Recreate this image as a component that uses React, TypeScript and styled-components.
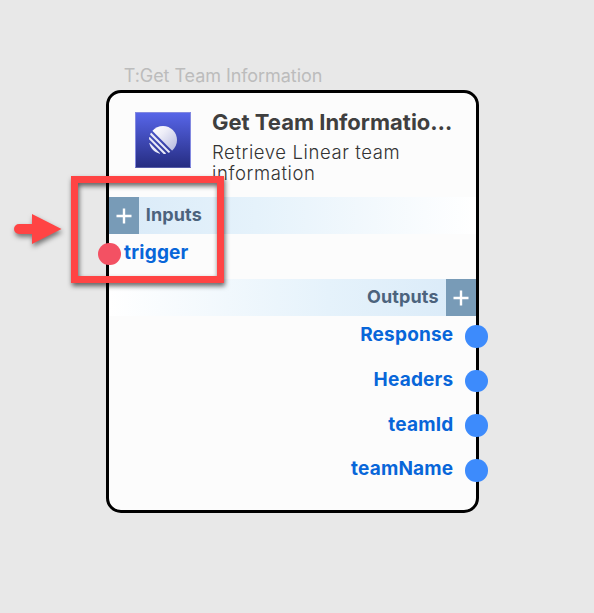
import React from "react";
import styled, { createGlobalStyle } from "styled-components";

const GlobalStyle = createGlobalStyle`
  *, *::before, *::after { box-sizing: border-box; }
  body { margin: 0; background: #e8e8e8; font-family: Inter, "Liberation Sans", sans-serif; }
`;

const Canvas = styled.main`
  position: relative;
  width: 594px;
  height: 613px;
  padding: 65px 0 0 105.7px;
  overflow: hidden;
  background: #e8e8e8;
`;

const Caption = styled.div`
  height: 24.6px;
  padding-left: 18px;
  font-size: 18px;
  line-height: 22px;
  letter-spacing: -0.06px;
  color: #bcbcbc;
  white-space: nowrap;
`;

const Card = styled.section`
  width: 373px;
  height: 423.4px;
  border: 3px solid #000;
  border-radius: 15px;
  background: #fcfcfc;
`;

const Header = styled.header`
  display: flex;
  height: 104.4px;
  padding: 19.4px 0 0 26px;
`;

const Logo = styled.div`
  display: grid;
  place-items: center;
  flex: none;
  width: 56px;
  height: 56px;
  margin-right: 21.3px;
  border: 1px solid #8389e0;
  border-bottom-color: #555ba9;
  background: linear-gradient(#5765e8, #262d82);
`;

const Titles = styled.div`
  width: 250px;
`;

const Title = styled.h1`
  margin: -3px 0 0;
  font-size: 22px;
  line-height: 27px;
  font-weight: 700;
  letter-spacing: 0;
  color: #3f3f3f;
  white-space: nowrap;
`;

const Description = styled.p`
  width: 220px;
  margin: 6px 0 0;
  font-size: 18.5px;
  line-height: 21px;
  font-weight: 300;
  letter-spacing: 0.6px;
  color: #333;
`;

type Side = "left" | "right";

const Band = styled.div<{ $side: Side }>`
  display: flex;
  flex-direction: ${(p) => (p.$side === "left" ? "row" : "row-reverse")};
  align-items: center;
  height: 37px;
  background: linear-gradient(to ${(p) => (p.$side === "left" ? "right" : "left")}, #d9eaf8, #e5f2fb 40%, #fff);
`;

const AddButton = styled.button`
  display: grid;
  place-items: center;
  width: 30px;
  height: 37px;
  padding: 2px 0 0;
  border: 0;
  background: #789bb7;
`;

const BandLabel = styled.span`
  margin: -1px 7px 0;
  font-size: 18px;
  line-height: 22px;
  font-weight: 650;
  letter-spacing: 0.15px;
  color: #4c637d;
`;

const InputList = styled.div`
  height: 45px;
`;

const OutputList = styled.div`
  display: flex;
  flex-direction: column;
  margin-top: -2px;
`;

const PortRow = styled.div<{ $side: Side }>`
  display: flex;
  flex-direction: ${(p) => (p.$side === "left" ? "row" : "row-reverse")};
  align-items: center;
  height: ${(p) => (p.$side === "left" ? 40 : 44.7)}px;
  margin: 0 -12.3px 0 -10.7px;
`;

const Port = styled.span<{ $side: Side }>`
  flex: none;
  width: 22.6px;
  height: 22.6px;
  border-radius: 50%;
  background: ${(p) => (p.$side === "left" ? "#f35163" : "#3d8bfc")};
`;

const PortLabel = styled.span<{ $side: Side }>`
  margin: ${(p) => (p.$side === "left" ? "-3px 3.5px 0" : "-3px 12px 0")};
  font-size: 19px;
  line-height: 23px;
  font-weight: 650;
  letter-spacing: 0.2px;
  color: #0866d9;
`;

const Highlight = styled.div`
  position: absolute;
  left: 71px;
  top: 176px;
  width: 153px;
  height: 107px;
  border: 7px solid #ff4444;
  filter: drop-shadow(1px 3px 2.5px rgba(0, 0, 0, 0.6));
`;

const Pointer = styled.svg`
  position: absolute;
  left: 8px;
  top: 206px;
  filter: drop-shadow(1px 3px 2.5px rgba(0, 0, 0, 0.5));
`;

const LinearMark = () => (
  <svg width="28" height="28" viewBox="0 0 100 100" aria-hidden="true">
    <defs>
      <linearGradient id="mark" x1="0" y1="0" x2="1" y2="1">
        <stop offset="0" stopColor="#fff" />
        <stop offset="0.35" stopColor="#eeeef8" />
        <stop offset="1" stopColor="#b4b8de" />
      </linearGradient>
    </defs>
    <g fill="#e9eaf7">
      <path d="M1.225 61.523c-.222-.949.908-1.546 1.597-.857l36.512 36.512c.689.689.092 1.819-.857 1.597C20.052 94.452 5.548 79.949 1.225 61.523Z" />
      <path d="M.002 46.889a1 1 0 0 0 .289.761L52.35 99.709a1 1 0 0 0 .761.289c2.369-.148 4.694-.46 6.962-.926.765-.157 1.03-1.096.478-1.648L2.576 39.449c-.552-.552-1.491-.287-1.648.478A50 50 0 0 0 .002 46.889Z" />
      <path d="M4.211 29.705a1 1 0 0 0 .208 1.1l64.776 64.776a1 1 0 0 0 1.1.208 50 50 0 0 0 5.185-2.684c.552-.328.637-1.087.183-1.541L8.436 24.337c-.454-.454-1.213-.369-1.541.183a50 50 0 0 0-2.684 5.185Z" />
    </g>
    <path fill="url(#mark)" d="M12.659 18.074a1 1 0 0 1-.045-1.354C21.78 6.459 35.111 0 49.952 0 77.593 0 100 22.407 100 50.048c0 14.841-6.459 28.172-16.72 37.338a1 1 0 0 1-1.354-.045L12.659 18.074Z" />
  </svg>
);

const Plus = () => (
  <svg width="16" height="16" viewBox="0 0 16 16" aria-hidden="true">
    <path d="M8 .5v15M.5 8h15" stroke="#fff" strokeWidth="2.4" />
  </svg>
);

const outputs = ["Response", "Headers", "teamId", "teamName"];

export default function App() {
  return (
    <>
      <GlobalStyle />
      <Canvas>
        <Caption>T:Get Team Information</Caption>
        <Card>
          <Header>
            <Logo><LinearMark /></Logo>
            <Titles>
              <Title>Get Team Informatio…</Title>
              <Description>Retrieve Linear team information</Description>
            </Titles>
          </Header>
          <Band $side="left">
            <AddButton aria-label="Add input"><Plus /></AddButton>
            <BandLabel>Inputs</BandLabel>
          </Band>
          <InputList>
            <PortRow $side="left">
              <Port $side="left" />
              <PortLabel $side="left">trigger</PortLabel>
            </PortRow>
          </InputList>
          <Band $side="right">
            <AddButton aria-label="Add output"><Plus /></AddButton>
            <BandLabel>Outputs</BandLabel>
          </Band>
          <OutputList>
            {outputs.map((name) => (
              <PortRow key={name} $side="right">
                <Port $side="right" />
                <PortLabel $side="right">{name}</PortLabel>
              </PortRow>
            ))}
          </OutputList>
        </Card>
        <Highlight />
        <Pointer width="60" height="48" viewBox="0 0 60 48" aria-hidden="true">
          <path d="M11 18H24V8L53.500 23L24 38V28H11A5 5 0 0 1 11 18Z" fill="#ff4444" />
        </Pointer>
      </Canvas>
    </>
  );
}
